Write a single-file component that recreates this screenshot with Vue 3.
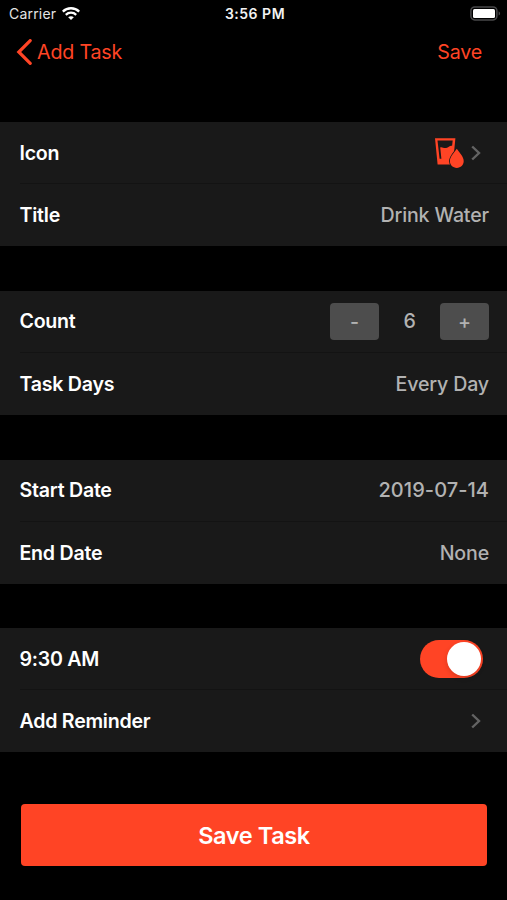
<template>
  <div class="screen">
    <header class="status-bar">
      <div class="status-left">
        <span class="carrier">Carrier</span>
        <svg class="wifi" width="18" height="13" viewBox="0 0 18 13" fill="none" stroke="#fff">
          <path d="M0.8 4.6C5.3 0.2 12.7 0.2 17.2 4.6" stroke-width="2.4" />
          <path d="M3.8 7.8C6.7 5 11.3 5 14.2 7.8" stroke-width="2.3" />
          <path d="M9 13L6.2 10.2C7.8 8.8 10.2 8.8 11.8 10.2Z" fill="#fff" stroke="none" />
        </svg>
      </div>
      <span class="clock">3:56 PM</span>
      <div class="status-right">
        <svg width="31" height="15" viewBox="0 0 31 15">
          <rect x="0.9" y="0.9" width="26" height="13" rx="3.8" fill="none" stroke="#48484a" stroke-width="1.5" />
          <rect x="3" y="3" width="22" height="9" rx="1.5" fill="#fff" />
          <path d="M28.6 5.2C30.6 6 30.6 8.8 28.6 9.6Z" fill="#48484a" />
        </svg>
      </div>
    </header>

    <nav class="nav-bar">
      <button class="nav-button back">
        <svg width="16" height="26" viewBox="0 0 16 26" fill="none" stroke="#ff4425" stroke-width="3.2">
          <path d="M14.2 1.6L2.8 13L14.2 24.4" stroke-linecap="round" />
        </svg>
        <span class="back-label">Add Task</span>
      </button>
      <button class="nav-button save-link">Save</button>
    </nav>

    <main class="form">
      <section v-for="(group, index) in groups" :key="index" class="group">
        <div v-for="row in group" :key="row.label" class="row">
          <span class="label">{{ row.label }}</span>

          <div v-if="row.type === 'icon'" class="disclosure">
            <svg class="water-icon" width="32" height="34" viewBox="0 0 32 34">
              <path d="M1 2.2H21.4L18.8 28.6H3.6ZM3.5 4.6L5.6 22.8H7.4L6.2 11.4C8.4 10.8 9.8 12.6 12.2 12C14.6 11.3 15.6 9.4 18.1 9.8L18.7 4.6Z" fill="#ff4425" fill-rule="evenodd" />
              <path d="M22.8 12.8C25 16.2 29.7 20.5 29.7 25.1C29.7 29 26.7 32 22.8 32C18.9 32 15.9 29 15.9 25.1C15.9 20.5 20.6 16.2 22.8 12.8Z" fill="#ff4425" stroke="#191919" stroke-width="1.8" paint-order="stroke" />
            </svg>
            <svg class="chevron" width="10" height="16" viewBox="0 0 10 16">
              <path d="M1.2 1.5L8 8L1.2 14.5" />
            </svg>
          </div>

          <div v-else-if="row.type === 'stepper'" class="stepper">
            <button class="step" @click="changeCount(-1)">-</button>
            <span class="count">{{ count }}</span>
            <button class="step" @click="changeCount(1)">+</button>
          </div>

          <button
            v-else-if="row.type === 'switch'"
            class="switch"
            :class="{ on: reminderOn }"
            role="switch"
            :aria-checked="reminderOn"
            @click="reminderOn = !reminderOn"
          >
            <span class="knob"></span>
          </button>

          <div v-else-if="row.type === 'link'" class="disclosure">
            <svg class="chevron" width="10" height="16" viewBox="0 0 10 16">
              <path d="M1.2 1.5L8 8L1.2 14.5" />
            </svg>
          </div>

          <span v-else class="value" :class="row.type">{{ row.value }}</span>
        </div>
      </section>
    </main>

    <button class="save-task">Save Task</button>
  </div>
</template>

<script setup>
import { ref } from 'vue'

const count = ref(6)
const reminderOn = ref(true)

const groups = [
  [
    { label: 'Icon', type: 'icon' },
    { label: 'Title', value: 'Drink Water' }
  ],
  [
    { label: 'Count', type: 'stepper' },
    { label: 'Task Days', value: 'Every Day' }
  ],
  [
    { label: 'Start Date', type: 'date', value: '2019-07-14' },
    { label: 'End Date', value: 'None' }
  ],
  [
    { label: '9:30 AM', type: 'switch' },
    { label: 'Add Reminder', type: 'link' }
  ]
]

const changeCount = (step) => {
  count.value = Math.max(1, count.value + step)
}
</script>

<style>
body {
  background: #000;
}
</style>

<style scoped>
.screen {
  box-sizing: border-box;
  width: 100%;
  height: 900px;
  background: #000;
  color: #fff;
  font-family: Inter, 'Liberation Sans', sans-serif;
  overflow: hidden;
}

button {
  border: 0;
  margin: 0;
  padding: 0;
  background: none;
  color: inherit;
  font-family: inherit;
}

.status-bar {
  display: grid;
  grid-template-columns: 1fr auto 1fr;
  align-items: center;
  height: 27px;
  padding: 0 6px 0 9px;
}

.status-left {
  display: flex;
  align-items: center;
  gap: 6px;
}

.carrier {
  font-size: 14px;
  letter-spacing: 0.2px;
  color: #e4e4e4;
}

.clock {
  font-size: 14px;
  font-weight: 600;
  letter-spacing: 0.5px;
  color: #f2f2f2;
}

.status-right {
  display: flex;
  justify-content: flex-end;
}

.nav-bar {
  display: flex;
  align-items: center;
  justify-content: space-between;
  height: 50px;
  padding: 0 25px 0 16px;
  margin-bottom: 45px;
}

.nav-button {
  display: flex;
  align-items: center;
  gap: 5px;
  height: 50px;
  font-size: 19.7px;
  letter-spacing: -0.2px;
  color: #ff4425;
}

.form {
  display: grid;
  gap: 44.8px;
}

.group {
  background: #191919;
}

.row {
  display: flex;
  align-items: center;
  justify-content: space-between;
  box-sizing: border-box;
  height: 62px;
  margin-left: 19.5px;
  padding-right: 18px;
}

.row:first-child {
  border-bottom: 1px solid #131313;
}

.label {
  font-size: 19.6px;
  font-weight: 600;
  letter-spacing: -0.25px;
}

.value,
.count {
  font-size: 19.6px;
  font-weight: 500;
  letter-spacing: -0.15px;
  color: #b2b2b2;
}

.value.date {
  font-size: 20px;
  letter-spacing: 0.05px;
}

.disclosure {
  display: flex;
  align-items: center;
  gap: 5px;
  padding-right: 8px;
}

.chevron {
  fill: none;
  stroke: #636363;
  stroke-width: 2.4;
}

.stepper {
  display: flex;
  align-items: center;
}

.step {
  width: 49px;
  height: 37px;
  padding-top: 1px;
  border-radius: 4px;
  background: #4d4d4d;
  color: #b2b2b2;
  font-size: 19.6px;
  font-weight: 500;
}

.count {
  width: 61px;
  text-align: center;
}

.switch {
  display: flex;
  align-items: center;
  box-sizing: border-box;
  width: 63px;
  height: 38px;
  margin-right: 6px;
  padding: 0 2px;
  border-radius: 20px;
  background: #39393d;
}

.switch.on {
  justify-content: flex-end;
  background: #ff4425;
}

.knob {
  width: 34px;
  height: 34px;
  border-radius: 50%;
  background: #fff;
  box-shadow: 0 2px 5px rgba(0, 0, 0, 0.15);
}

.save-task {
  display: block;
  width: 466px;
  height: 62px;
  margin: 52px auto 0 21px;
  border-radius: 4px;
  background: #ff4425;
  font-size: 23.5px;
  font-weight: 600;
  letter-spacing: -0.4px;
}
</style>
